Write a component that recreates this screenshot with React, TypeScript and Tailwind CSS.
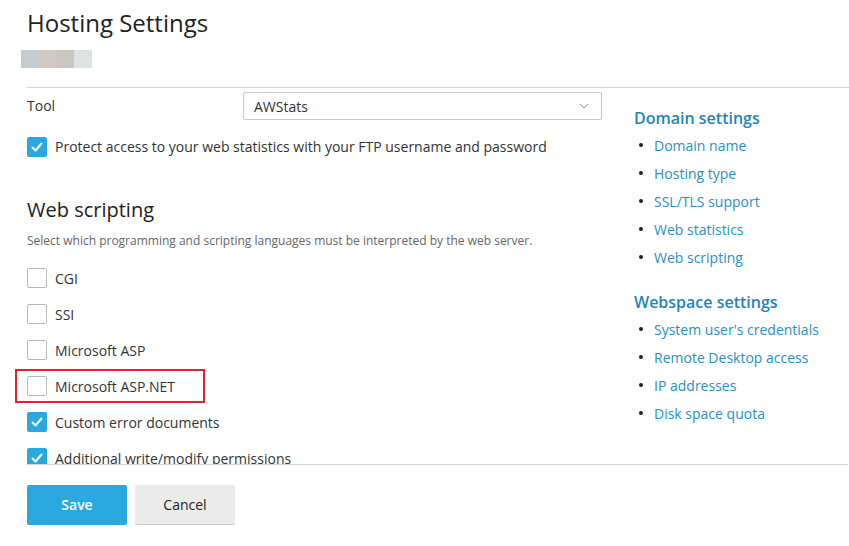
import React from "react";

type Option = { label: string; checked: boolean; highlight?: boolean };

const scripting: Option[] = [
  { label: "CGI", checked: false },
  { label: "SSI", checked: false },
  { label: "Microsoft ASP", checked: false },
  { label: "Microsoft ASP.NET", checked: false, highlight: true },
  { label: "Custom error documents", checked: true },
  { label: "Additional write/modify permissions", checked: true },
];

const domainLinks = ["Domain name", "Hosting type", "SSL/TLS support", "Web statistics", "Web scripting"];
const webspaceLinks = ["System user's credentials", "Remote Desktop access", "IP addresses", "Disk space quota"];

function Checkbox({ checked }: { checked: boolean }) {
  if (checked) {
    return (
      <span className="flex h-[20px] w-[20px] shrink-0 items-center justify-center rounded-[2px] bg-[#29a9e0]">
        <svg width="14" height="14" viewBox="0 0 14 14" fill="none">
          <path d="M2.5 7.5 L5.5 10.5 L11.5 3.5" stroke="#fff" strokeWidth="2" strokeLinecap="round" strokeLinejoin="round" />
        </svg>
      </span>
    );
  }
  return <span className="h-[20px] w-[20px] shrink-0 rounded-[2px] border border-[#b9b9b9] bg-white" />;
}

function LinkList({ items }: { items: string[] }) {
  return (
    <ul className="mt-[2px]">
      {items.map((item) => (
        <li key={item} className="flex h-[28px] items-center text-[14px] text-[#2b8fc4]">
          <span className="ml-[5px] mr-[11px] h-[4px] w-[4px] rounded-full bg-[#222]" />
          {item}
        </li>
      ))}
    </ul>
  );
}

export default function App() {
  return (
    <div className="h-[546px] w-[849px] overflow-hidden bg-white text-[#333] font-['Open_Sans',sans-serif]">
      <h1 className="ml-[27px] mt-[6px] text-[24px] leading-[33px] text-[#222]">Hosting Settings</h1>

      <div className="ml-[21px] mt-[11px] flex h-[18px] w-[71px]">
        <span className="w-[18px] bg-[#c4cbd1]" />
        <span className="w-[17px] bg-[#d0c9c4]" />
        <span className="w-[18px] bg-[#cbc6c1]" />
        <span className="w-[18px] bg-[#dde3e2]" />
      </div>

      <div className="ml-[27px] mt-[19px] h-px bg-[#d8d6dd]" />

      <div className="relative flex h-[376px] overflow-hidden pl-[27px]">
        <div className="w-[575px] shrink-0">
          <div className="mt-[4px] flex h-[28px] items-center">
            <span className="-mt-[1px] w-[216px] text-[14px] leading-[18px]">Tool</span>
            <div className="flex h-[28px] w-[359px] items-center justify-between rounded-[2px] border border-[#c8c8c8] px-[10px] text-[14px]">
              <span>AWStats</span>
              <svg width="10" height="6" viewBox="0 0 10 6" fill="none" className="mr-[2px]">
                <path d="M1 1 L5 5 L9 1" stroke="#999" strokeWidth="1" />
              </svg>
            </div>
          </div>

          <label className="mt-[16px] flex items-center gap-[8px] text-[14px]">
            <Checkbox checked />
            <span>Protect access to your web statistics with your FTP username and password</span>
          </label>

          <h2 className="mt-[39px] text-[20px] leading-[28px] text-[#222]">Web scripting</h2>
          <p className="mt-[9px] text-[12px] leading-[16px] text-[#666]">
            Select which programming and scripting languages must be interpreted by the web server.
          </p>

          <div className="mt-[19px] flex flex-col gap-[16px]">
            {scripting.map((opt) => (
              <label key={opt.label} className="relative flex h-[20px] items-center gap-[8px] text-[14px]">
                <Checkbox checked={opt.checked} />
                <span>{opt.label}</span>
                {opt.highlight ? (
                  <span className="absolute left-[-12px] top-[-7px] h-[34px] w-[190px] border-2 border-[#e3222b]" />
                ) : null}
              </label>
            ))}
          </div>
        </div>

        <aside className="ml-[32px] pt-[19px]">
          <h3 className="text-[16px] font-semibold leading-[22px] text-[#1f85b8]">Domain settings</h3>
          <LinkList items={domainLinks} />
          <h3 className="mt-[20px] text-[16px] font-semibold leading-[22px] text-[#1f85b8]">Webspace settings</h3>
          <LinkList items={webspaceLinks} />
        </aside>
      </div>

      <div className="ml-[27px] mr-px h-px bg-[#d8d6dd]" />

      <div className="ml-[27px] mt-[20px] flex gap-[8px]">
        <button className="h-[40px] w-[100px] rounded-[2px] bg-[#29a9e0] pb-[2px] text-[14px] font-semibold text-white">Save</button>
        <button className="h-[40px] w-[100px] rounded-[2px] border-b border-[#c9c9c9] bg-[#ebebeb] text-[14px] text-[#222]">Cancel</button>
      </div>
    </div>
  );
}
